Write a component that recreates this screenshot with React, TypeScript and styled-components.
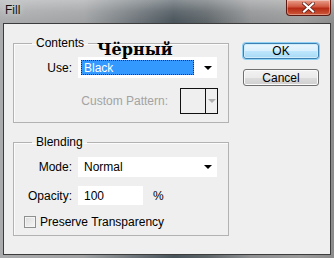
import React from "react";
import styled, { createGlobalStyle } from "styled-components";

const Global = createGlobalStyle`
  html, body { margin: 0; padding: 0; background: #8a8c8e; }
  #root { width: 334px; height: 258px; }
  * { box-sizing: border-box; }
`;

const Window = styled.div`
  position: relative;
  width: 334px;
  height: 258px;
  display: flex;
  flex-direction: column;
  background: linear-gradient(90deg, #a9abad 0%, #9fa1a3 25%, #6f767b 40%, #48535a 52%, #5d6468 62%, #8e9092 75%, #9a9a9a 90%, #8c8c8c 100%);
  font-family: "Liberation Sans", Arial, sans-serif;
  font-size: 12px;
  color: #000;
  overflow: hidden;
`;

const TitleBar = styled.div`
  height: 23px;
  flex: none;
  display: flex;
  align-items: flex-start;
  justify-content: space-between;
  padding-left: 5px;
  padding-right: 3px;
  background: linear-gradient(180deg, rgba(255,255,255,0.35) 0%, rgba(255,255,255,0.12) 50%, rgba(255,255,255,0) 100%);
`;

const Title = styled.span`
  font-size: 12px;
  line-height: 21px;
  color: #111;
  text-shadow: 0 0 6px rgba(255,255,255,0.8);
`;

const CloseButton = styled.div`
  width: 45px;
  height: 16px;
  border: 1px solid #5a1a12;
  border-top: none;
  border-radius: 0 0 4px 4px;
  background: linear-gradient(180deg, #e8a08e 0%, #d0573f 45%, #b52a14 55%, #cf5a3a 100%);
  display: flex;
  align-items: center;
  justify-content: center;
  box-shadow: inset 0 0 0 1px rgba(255,255,255,0.35);
`;

const Client = styled.div`
  flex: 1;
  margin: 0 3px 3px 3px;
  border: 1px solid #3c3c3c;
  background: #efefef;
  display: flex;
  gap: 14px;
  padding: 12px 0 0 9px;
`;

const Groups = styled.div`
  width: 216px;
  flex: none;
  display: flex;
  flex-direction: column;
  gap: 12px;
`;

const Group = styled.fieldset`
  margin: 0;
  padding: 0 10px 0 0;
  border: 1px solid #b2b2b2;
  box-shadow: inset 1px 1px 0 #fbfbfb;
  min-width: 0;
`;

const Legend = styled.legend`
  margin-left: 18px;
  padding: 0 4px;
  font-size: 12px;
  line-height: 14px;
  color: #000;
`;

const GroupBody = styled.div<{ $top: number; $bottom: number; $gap: number }>`
  display: flex;
  flex-direction: column;
  gap: ${(p) => p.$gap}px;
  padding-top: ${(p) => p.$top}px;
  padding-bottom: ${(p) => p.$bottom}px;
`;

const Row = styled.div<{ $end?: boolean }>`
  display: flex;
  align-items: center;
  justify-content: ${(p) => (p.$end ? "flex-end" : "flex-start")};
  gap: 6px;
`;

const Label = styled.span`
  width: 58px;
  flex: none;
  text-align: right;
  white-space: nowrap;
  color: #000;
`;

const PlainLabel = styled.span<{ $disabled?: boolean }>`
  white-space: nowrap;
  color: ${(p) => (p.$disabled ? "#a3a3a3" : "#000")};
  margin-right: 6px;
`;

const Select = styled.div<{ $h: number }>`
  width: 139px;
  flex: none;
  height: ${(p) => p.$h}px;
  background: #fff;
  display: flex;
  align-items: center;
  padding: 0 5px 0 3px;
`;

const SelectValue = styled.div<{ $active?: boolean }>`
  flex: 1;
  height: 15px;
  display: flex;
  align-items: center;
  padding-left: 3px;
  margin-right: 10px;
  background: ${(p) => (p.$active ? "#3399ff" : "transparent")};
  color: ${(p) => (p.$active ? "#fff" : "#000")};
  outline: ${(p) => (p.$active ? "1px dotted #1b2f4a" : "none")};
  outline-offset: -1px;
`;

const Arrow = styled.span<{ $color?: string }>`
  width: 0;
  height: 0;
  border-left: 4px solid transparent;
  border-right: 4px solid transparent;
  border-top: 4px solid ${(p) => p.$color || "#000"};
`;

const PatternBox = styled.div`
  width: 38px;
  height: 26px;
  flex: none;
  border: 1px solid #111;
  background: #efefef;
  display: flex;
`;

const PatternSwatch = styled.div`
  flex: 1;
  border-right: 1px solid #111;
`;

const PatternArrow = styled.div`
  width: 11px;
  display: flex;
  align-items: center;
  justify-content: center;
`;

const Input = styled.div`
  width: 65px;
  flex: none;
  height: 19px;
  background: #fff;
  display: flex;
  align-items: center;
  padding-left: 6px;
`;

const Percent = styled.span`
  margin-left: 4px;
`;

const CheckRow = styled.label`
  display: flex;
  align-items: center;
  gap: 4px;
  margin-left: 10px;
  height: 15px;
`;

const CheckBox = styled.span`
  width: 12px;
  height: 12px;
  border: 1px solid #8e8f8f;
  background: linear-gradient(135deg, #dcdcdc 0%, #f6f6f6 100%);
  box-shadow: inset 0 0 0 1px #f4f4f4;
`;

const Buttons = styled.div`
  width: 76px;
  display: flex;
  flex-direction: column;
  gap: 10px;
  padding-top: 7px;
`;

const Button = styled.div<{ $primary?: boolean; $h: number }>`
  height: ${(p) => p.$h}px;
  border-radius: 3px;
  border: 1px solid ${(p) => (p.$primary ? "#3c7fb1" : "#707070")};
  background: ${(p) =>
    p.$primary
      ? "linear-gradient(180deg, #eaf6fd 0%, #d9f0fc 50%, #bee6fd 51%, #a7d9f5 100%)"
      : "linear-gradient(180deg, #f2f2f2 0%, #ebebeb 50%, #dddddd 51%, #cfcfcf 100%)"};
  box-shadow: ${(p) => (p.$primary ? "0 0 0 1px #8fd0f5, inset 0 0 0 1px #d0ecfb" : "inset 0 0 0 1px #fbfbfb")};
  display: flex;
  align-items: center;
  justify-content: center;
  font-size: 12px;
  color: #000;
`;

const Annotation = styled.div`
  position: absolute;
  left: 97px;
  top: 40px;
  font-family: "DejaVu Serif", "Liberation Serif", serif;
  font-weight: bold;
  font-size: 16px;
  line-height: 19px;
  color: #000;
`;

export default function App() {
  return (
    <>
      <Global />
      <Window>
        <TitleBar>
          <Title>Fill</Title>
          <CloseButton>
            <svg width="13" height="11" viewBox="0 0 13 11">
              <path d="M2 1.5 L11 9.5 M11 1.5 L2 9.5" stroke="#5a1a12" strokeWidth="3.6" strokeLinecap="square" />
              <path d="M2 1.5 L11 9.5 M11 1.5 L2 9.5" stroke="#ffffff" strokeWidth="2.2" strokeLinecap="square" />
            </svg>
          </CloseButton>
        </TitleBar>
        <Client>
          <Groups>
            <Group>
              <Legend>Contents</Legend>
              <GroupBody $top={7} $bottom={8} $gap={10}>
                <Row>
                  <Label>Use:</Label>
                  <Select $h={21}>
                    <SelectValue $active>Black</SelectValue>
                    <Arrow />
                  </Select>
                </Row>
                <Row $end>
                  <PlainLabel $disabled>Custom Pattern:</PlainLabel>
                  <PatternBox>
                    <PatternSwatch />
                    <PatternArrow>
                      <Arrow $color="#b0b0b0" />
                    </PatternArrow>
                  </PatternBox>
                </Row>
              </GroupBody>
            </Group>
            <Group>
              <Legend>Blending</Legend>
              <GroupBody $top={8} $bottom={6} $gap={9}>
                <Row>
                  <Label>Mode:</Label>
                  <Select $h={20}>
                    <SelectValue>Normal</SelectValue>
                    <Arrow />
                  </Select>
                </Row>
                <Row>
                  <Label>Opacity:</Label>
                  <Input>100</Input>
                  <Percent>%</Percent>
                </Row>
                <CheckRow>
                  <CheckBox />
                  <span>Preserve Transparency</span>
                </CheckRow>
              </GroupBody>
            </Group>
          </Groups>
          <Buttons>
            <Button $primary $h={16}>OK</Button>
            <Button $h={17}>Cancel</Button>
          </Buttons>
        </Client>
        <Annotation>Чёрный</Annotation>
      </Window>
    </>
  );
}
